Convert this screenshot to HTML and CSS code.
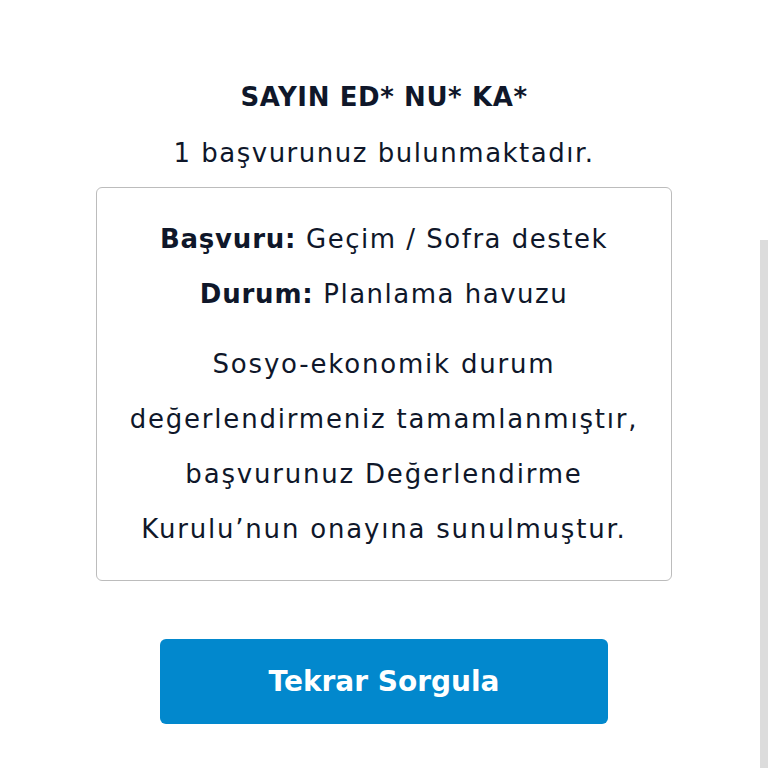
FILE: index.html
```html
<!DOCTYPE html>
<html lang="tr">
<head>
<meta charset="UTF-8">
<meta name="viewport" content="width=device-width, initial-scale=1.0">
<title>Başvuru Sorgulama</title>
<link rel="stylesheet" href="styles.css">
</head>
<body>
<div class="page">
    <div class="title">SAYIN ED* NU* KA*</div>
    <div class="subtitle">1 başvurunuz bulunmaktadır.</div>

    <div class="result-box">
        <div class="row"><b>Başvuru:</b> Geçim / Sofra destek</div>
        <div class="row"><b>Durum:</b> Planlama havuzu</div>
        <p class="desc">Sosyo-ekonomik durum<br>değerlendirmeniz tamamlanmıştır,<br>başvurunuz Değerlendirme<br>Kurulu’nun onayına sunulmuştur.</p>
    </div>

    <button class="query-button">Tekrar Sorgula</button>
</div>
<div class="scroll-thumb"></div>
</body>
</html>
```

FILE: styles.css
```css
body {
    font-family: "DejaVu Sans", "Open Sans", sans-serif;
    margin: 0;
    padding: 0;
    background: #fff;
    color: #0f172a;
}

.page {
    display: flex;
    flex-direction: column;
    align-items: center;
    padding-top: 77px;
}

.title {
    font-size: 26px;
    font-weight: 700;
    line-height: 40px;
    letter-spacing: 0.6px;
}

.subtitle {
    margin-top: 16px;
    font-size: 26px;
    line-height: 40px;
    letter-spacing: 1.5px;
}

.result-box {
    width: 576px;
    box-sizing: border-box;
    margin-top: 14px;
    padding: 24px 0 23px;
    border: 1px solid #bcbcbc;
    border-radius: 6px;
    text-align: center;
    font-size: 26px;
    line-height: 55px;
    letter-spacing: 1.5px;
}

.row b {
    font-weight: 700;
    letter-spacing: 0.8px;
}

.desc {
    margin: 15px 0 0;
    letter-spacing: 1.8px;
}

.query-button {
    width: 448px;
    height: 85px;
    margin-top: 58px;
    border: none;
    border-radius: 6px;
    background-color: #0288cd;
    color: #fff;
    font-family: inherit;
    font-size: 28px;
    font-weight: 700;
    cursor: pointer;
}

.scroll-thumb {
    position: fixed;
    right: 0;
    top: 240px;
    bottom: 0;
    width: 8px;
    background: #dcdcdc;
}
```
